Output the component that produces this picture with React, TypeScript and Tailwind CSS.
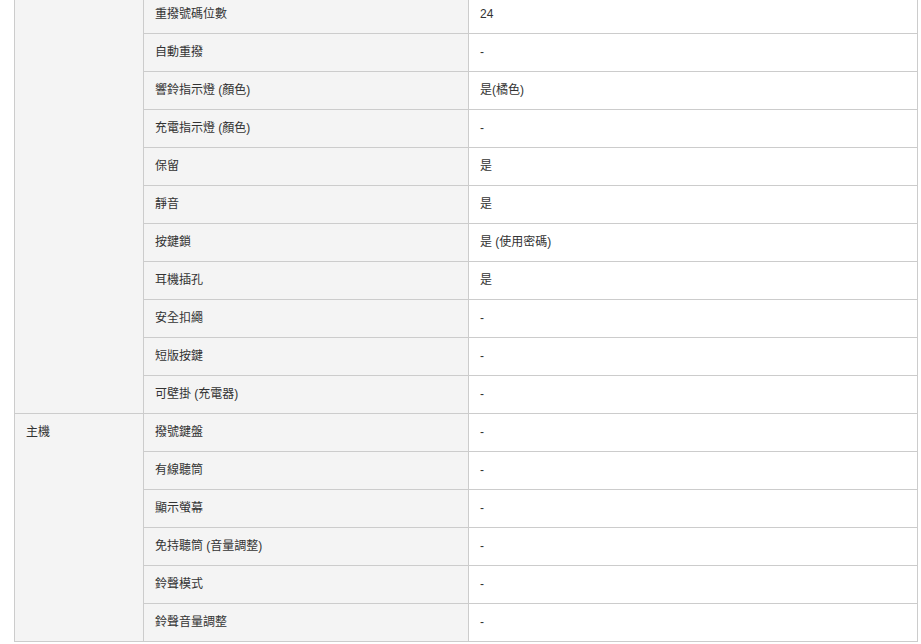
const firstGroup: [string, string][] = [
  ["重撥號碼位數", "24"],
  ["自動重撥", "-"],
  ["響鈴指示燈 (顏色)", "是(橘色)"],
  ["充電指示燈 (顏色)", "-"],
  ["保留", "是"],
  ["靜音", "是"],
  ["按鍵鎖", "是 (使用密碼)"],
  ["耳機插孔", "是"],
  ["安全扣繩", "-"],
  ["短版按鍵", "-"],
  ["可壁掛 (充電器)", "-"],
];

const hostGroup: [string, string][] = [
  ["撥號鍵盤", "-"],
  ["有線聽筒", "-"],
  ["顯示螢幕", "-"],
  ["免持聽筒 (音量調整)", "-"],
  ["鈴聲模式", "-"],
  ["鈴聲音量調整", "-"],
];

const cell = "border border-[#cccccc] px-[11px] py-[10px] align-top text-left font-normal";

function Group({ title, rows }: { title: string; rows: [string, string][] }) {
  return (
    <>
      {rows.map(([label, value], i) => (
        <tr key={label}>
          {i === 0 ? (
            <th rowSpan={rows.length} className={`${cell} bg-[#f4f4f4]`}>
              {title}
            </th>
          ) : null}
          <td className={`${cell} bg-[#f4f4f4]`}>{label}</td>
          <td className={`${cell} bg-white`}>{value}</td>
        </tr>
      ))}
    </>
  );
}

export default function App() {
  return (
    <div
      className="h-[644px] w-[921px] overflow-hidden bg-white text-[12px] leading-[17px] text-[#333333]"
      style={{ fontFamily: '"Liberation Sans", "Noto Sans CJK TC", sans-serif' }}
    >
      <table className="-mt-[5px] ml-[14px] w-[903px] table-fixed border-collapse">
        <colgroup>
          <col className="w-[129px]" />
          <col className="w-[325px]" />
          <col className="w-[449px]" />
        </colgroup>
        <tbody>
          <Group title="" rows={firstGroup} />
          <Group title="主機" rows={hostGroup} />
        </tbody>
      </table>
    </div>
  );
}
